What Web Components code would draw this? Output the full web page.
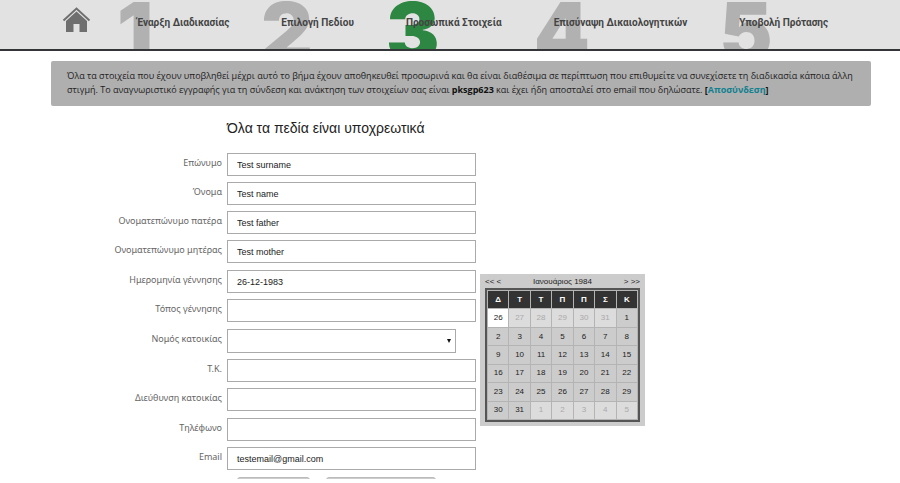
<!DOCTYPE html>
<html lang="el">
<head>
<meta charset="utf-8">
<title>Προσωπικά Στοιχεία</title>
<style>
  body {
    margin: 0;
    background: #fff;
    color: #222;
    font: 10px/14px "Liberation Sans", Arial, sans-serif;
  }
  main {
    padding: 10px 29px 0 51px;
  }
  info-box a {
    color: #11808f;
    text-decoration: none;
  }
  .columns {
    display: flex;
    align-items: flex-start;
    gap: 4px;
  }
  personal-form { width: 425px; }
  date-picker { margin-top: 168px; }
</style>
</head>
<body>

<step-nav>
  <step-item number="1">Έναρξη Διαδικασίας</step-item>
  <step-item number="2">Επιλογή Πεδίου</step-item>
  <step-item number="3" current>Προσωπικά Στοιχεία</step-item>
  <step-item number="4">Επισύναψη Δικαιολογητικών</step-item>
  <step-item number="5">Υποβολή Πρότασης</step-item>
</step-nav>

<main>
  <info-box>Όλα τα στοιχεία που έχουν υποβληθεί μέχρι αυτό το βήμα έχουν αποθηκευθεί προσωρινά και θα είναι διαθέσιμα σε περίπτωση που επιθυμείτε να συνεχίσετε τη διαδικασία κάποια άλλη στιγμή. Το αναγνωριστικό εγγραφής για τη σύνδεση και ανάκτηση των στοιχείων σας είναι <b>pksgp623</b> και έχει ήδη αποσταλεί στο email που δηλώσατε. <b>[<a href="#logout">Αποσύνδεση</a>]</b></info-box>
  <div class="columns">
    <personal-form></personal-form>
    <date-picker></date-picker>
  </div>
</main>

<script>
'use strict';

class StepNav extends HTMLElement {
  constructor() {
    super();
    this.attachShadow({ mode: 'open' }).innerHTML = `
      <style>
        :host {
          display: block;
          background: #e2e2e2;
          border-bottom: 2px solid #333538;
          overflow: hidden;
        }
        nav {
          display: flex;
          align-items: center;
          height: 45px;
          padding: 0 0 4px 62px;
        }
        .home { margin: -6px 46px 0 0; }
        svg { display: block; }
        .steps { display: flex; gap: 52px; }
      </style>
      <nav>
        <a class="home" href="#home" aria-label="Αρχική">
          <svg width="29" height="26" viewBox="0 0 29 26">
            <path d="M1.500 13.500 14.500 1.500 27.500 13.500" fill="none" stroke="#6f6f6f" stroke-width="2"/>
            <path d="M14.500 4.500 25 14v11h-7.500v-8h-6v8H4V14z" fill="#6f6f6f"/>
          </svg>
        </a>
        <div class="steps"><slot></slot></div>
      </nav>
    `;
  }
}

class StepItem extends HTMLElement {
  constructor() {
    super();
    this.attachShadow({ mode: 'open' }).innerHTML = `
      <style>
        :host {
          display: block;
          font-family: Roboto, "Liberation Sans", sans-serif;
        }
        a {
          display: block;
          position: relative;
          color: #444;
          font-weight: bold;
          line-height: 14px;
          text-decoration: none;
          white-space: nowrap;
        }
        /* large digit lies behind the step name */
        .digit {
          position: absolute;
          left: -20px;
          top: -25px;
          color: #b1b1b1;
          font: 900 80px/80px Inter, "Liberation Sans", sans-serif;
        }
        :host([current]) .digit { color: #2d8641; }
        .name { position: relative; }
      </style>
      <a href="#step"><span class="digit"></span><span class="name"><slot></slot></span></a>
    `;
  }

  connectedCallback () {
    const number = this.getAttribute('number');
    this.shadowRoot.querySelector('.digit').textContent = number;
    this.shadowRoot.querySelector('a').href = `#step-${number}`;
  }
}

class InfoBox extends HTMLElement {
  constructor() {
    super();
    this.attachShadow({ mode: 'open' }).innerHTML = `
      <style>
        :host {
          display: block;
          padding: 8px 16px 9px;
          background: #afafaf;
          border-radius: 2px;
          font-family: "Open Sans", sans-serif;
          font-size: 9px;
        }
        ::slotted(b) { color: #111; }
      </style>
      <slot></slot>
    `;
  }
}

class FormField extends HTMLElement {
  connectedCallback () {
    const label = this.getAttribute('label');
    const value = this.getAttribute('value') || '';
    const control = this.hasAttribute('select')
      ? '<span class="select"><select id="control"><option></option></select></span>'
      : `<input id="control" type="text" value="${value}">`;

    this.attachShadow({ mode: 'open' }).innerHTML = `
      <style>
        :host {
          display: grid;
          grid-template-columns: 171px 1fr;
          column-gap: 5px;
        }
        label {
          padding-top: 3px;
          color: #666;
          font-family: "Noto Sans", sans-serif;
          font-size: 9px;
          text-align: right;
        }
        input, select {
          box-sizing: border-box;
          width: 100%;
          height: 23px;
          margin: 0;
          padding: 0 9px;
          border: 1px solid #aaa;
          border-radius: 0;
          background: #fff;
          color: #222;
          font: 9px "Liberation Sans", Arial, sans-serif;
        }
        .select {
          display: grid;
          align-items: center;
          margin-right: 20px;
        }
        .select::after {
          content: "";
          grid-area: 1 / 1;
          justify-self: end;
          margin-right: 5px;
          border: 2px solid transparent;
          border-top: 4px solid #111;
          border-bottom: 0;
          pointer-events: none;
        }
        select {
          grid-area: 1 / 1;
          height: 24px;
          appearance: none;
        }
      </style>
      <label for="control">${label}</label>
      ${control}
    `;
  }
}

class PersonalForm extends HTMLElement {
  constructor() {
    super();
    this.attachShadow({ mode: 'open' }).innerHTML = `
      <style>
        :host { display: block; }
        h1 {
          margin: 13px 0 16px 176px;
          color: #222;
          font-size: 14px;
          font-weight: normal;
          line-height: 18px;
        }
        form { display: grid; gap: 7px; }
        .group { display: grid; gap: 6px; }
        .actions {
          display: flex;
          gap: 16px;
          height: 2px;
          margin-left: 186px;
          overflow: hidden;
        }
        button {
          flex: none;
          width: 73px;
          height: 23px;
          border: 1px solid #bbb;
          border-radius: 3px;
          background: #ccc;
        }
        button + button { width: 110px; }
      </style>
      <h1>Όλα τα πεδία είναι υποχρεωτικά</h1>
      <form>
        <div class="group">
          <form-field label="Επώνυμο" value="Test surname"></form-field>
          <form-field label="Όνομα" value="Test name"></form-field>
          <form-field label="Ονοματεπώνυμο πατέρα" value="Test father"></form-field>
          <form-field label="Ονοματεπώνυμο μητέρας" value="Test mother"></form-field>
        </div>
        <div class="group">
          <form-field label="Ημερομηνία γέννησης" value="26-12-1983"></form-field>
          <form-field label="Τόπος γέννησης"></form-field>
        </div>
        <div class="group">
          <form-field label="Νομός κατοικίας" select></form-field>
          <form-field label="Τ.Κ."></form-field>
          <form-field label="Διεύθυνση κατοικίας"></form-field>
        </div>
        <div class="group">
          <form-field label="Τηλέφωνο"></form-field>
          <form-field label="Email" value="testemail@gmail.com"></form-field>
        </div>
        <div class="actions">
          <button type="button" aria-label="Πίσω"></button>
          <button type="submit" aria-label="Συνέχεια"></button>
        </div>
      </form>
    `;
  }
}

class DatePicker extends HTMLElement {
  constructor() {
    super();
    this.attachShadow({ mode: 'open' }).innerHTML = `
      <style>
        :host {
          display: block;
          box-sizing: border-box;
          width: 165px;
          padding: 1px 5px 4px;
          background: #ccc;
          color: #222;
          font: 8px "Liberation Sans", Arial, sans-serif;
        }
        header {
          display: flex;
          justify-content: space-between;
          align-items: center;
          height: 13px;
        }
        button {
          padding: 0;
          border: 0;
          background: none;
          color: inherit;
          font: inherit;
        }
        table {
          width: 100%;
          height: 134px;
          border: 2px solid #555;
          border-collapse: separate;
          border-spacing: 1px;
          background: #b4b4b4;
        }
        th, td {
          width: 20px;
          height: 17px;
          padding: 0;
          background: #ccc;
          text-align: center;
          line-height: 10px;
        }
        th { background: #333; color: #fff; }
        td button { display: block; width: 100%; }
        .other { background: #dcdcdc; color: #aaa; }
        .selected { background: #fff; }
      </style>
      <header>
        <span><button type="button">&lt;&lt;</button> <button type="button">&lt;</button></span>
        <span class="month">Ιανουάριος 1984</span>
        <span><button type="button">&gt;</button> <button type="button">&gt;&gt;</button></span>
      </header>
      <table>
        <tbody><tr></tr></tbody>
      </table>
    `;
  }

  connectedCallback () {
    const head = this.shadowRoot.querySelector('tr');
    head.innerHTML = [...'ΔΤΤΠΠΣΚ'].map(d => `<th scope="col">${d}</th>`).join('');

    // weeks from Monday 26 December 1983
    const body = this.shadowRoot.querySelector('tbody');
    const day = new Date(1983, 11, 26);
    for (let week = 0; week < 6; week++) {
      const row = body.insertRow();
      for (let i = 0; i < 7; i++) {
        const cell = row.insertCell();
        cell.innerHTML = `<button type="button">${day.getDate()}</button>`;
        if (week === 0 && i === 0)
          cell.className = 'selected';
        else if (day.getMonth() !== 0)
          cell.className = 'other';
        day.setDate(day.getDate() + 1);
      }
    }
  }
}

window.customElements.define('step-nav', StepNav);
window.customElements.define('step-item', StepItem);
window.customElements.define('info-box', InfoBox);
window.customElements.define('form-field', FormField);
window.customElements.define('personal-form', PersonalForm);
window.customElements.define('date-picker', DatePicker);
</script>
</body>
</html>
